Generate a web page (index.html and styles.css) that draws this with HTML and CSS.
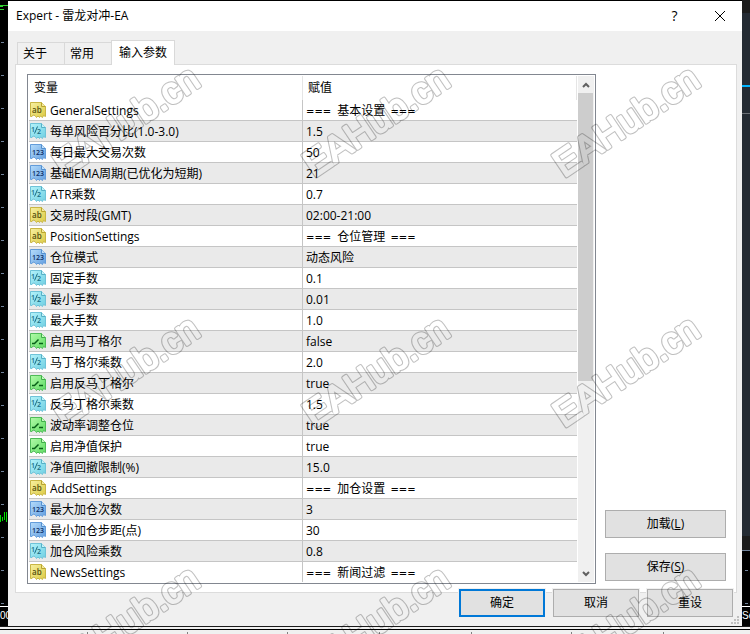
FILE: index.html
```
<!DOCTYPE html>
<html lang="zh-CN">
<head>
  <meta charset="UTF-8" />
  <meta name="viewport" content="width=device-width, initial-scale=1" />
  <title>Expert - 雷龙对冲-EA</title>
  <link rel="stylesheet" href="styles.css">
</head>
<body>

  <!-- Icon definitions -->
  <svg class="defs" aria-hidden="true">
    <defs>
      <linearGradient id="gYellow" x1="0" y1="0" x2="1" y2="1"><stop offset="0" stop-color="#f7f0a0" /><stop offset="1" stop-color="#dccb45" /></linearGradient>
      <linearGradient id="gCyan" x1="0" y1="0" x2="1" y2="1"><stop offset="0" stop-color="#b4f3fa" /><stop offset="1" stop-color="#6fcfe2" /></linearGradient>
      <linearGradient id="gBlue" x1="0" y1="0" x2="1" y2="1"><stop offset="0" stop-color="#b5dcfb" /><stop offset="1" stop-color="#649fe0" /></linearGradient>
      <linearGradient id="gGreen" x1="0" y1="0" x2="1" y2="1"><stop offset="0" stop-color="#b2fba9" /><stop offset="1" stop-color="#5edb62" /></linearGradient>
      <path id="sheet" d="M.5.5H11.500L15.500 4.500V14.500L13.500 13.500L12.500 15.500L10.500 14L9.500 15.500L8 14L6.500 15.500L5 13.500L3 13L2 14.500L.5 14.500Z" />
      <path id="fold" d="M11.500.5V4.500H15.500" />
      <symbol id="ab" viewBox="0 0 16 16">
        <use href="#sheet" fill="url(#gYellow)" stroke="#c9b645" /><use href="#fold" fill="#f3eaa0" stroke="#b9a42f" />
        <text class="glyph" x="2" y="11" font-size="8" fill="#56500f">ab</text>
      </symbol>
      <symbol id="half" viewBox="0 0 16 16">
        <use href="#sheet" fill="url(#gCyan)" stroke="#6fc3d8" /><use href="#fold" fill="#c5f2f8" stroke="#55b0c6" />
        <text class="glyph" x="1" y="9" font-size="7" fill="#176c83">1</text>
        <path d="M4.500 10.500L7.500 3.500" stroke="#176c83" fill="none" />
        <text class="glyph" x="7" y="11" font-size="7" fill="#176c83">2</text>
      </symbol>
      <symbol id="num" viewBox="0 0 16 16">
        <use href="#sheet" fill="url(#gBlue)" stroke="#639cda" /><use href="#fold" fill="#c5e2fa" stroke="#5490cf" />
        <text class="glyph" x="2" y="11" font-size="7" fill="#0d2f66">123</text>
      </symbol>
      <symbol id="bool" viewBox="0 0 16 16">
        <use href="#sheet" fill="url(#gGreen)" stroke="#4fbb58" /><use href="#fold" fill="#c6fabe" stroke="#3fae49" />
        <path d="M2 10.500H4.500L8.500 6.500M9 10.500H13" stroke="#086018" stroke-width="1.500" fill="none" />
      </symbol>
      <!-- one tile row of the watermark -->
      <g id="markRow">
        <text transform="translate(64 178) rotate(-34)">EAHub.cn</text>
        <text transform="translate(314 178) rotate(-34)">EAHub.cn</text>
        <text transform="translate(564 178) rotate(-34)">EAHub.cn</text>
      </g>
    </defs>
  </svg>

  <div class="desktop">
    <!-- Chart peeking out on the left -->
    <div class="chart">
      <svg width="8" height="626" aria-hidden="true">
        <path d="M0 5.500H8M0 6.500H3M0 9.500H4" stroke="#2fd02f" fill="none" />
        <path d="M2.500 42V606" stroke="#71839b" stroke-width="3" stroke-dasharray="1 32" />
        <path d="M0.500 515V522M2.500 517V521M4.500 512V520M6.500 512V522" stroke="#00e000" />
        <path d="M0 606.500H8" stroke="#fff" />
        <text class="axis" x="0" y="619">00</text>
      </svg>
    </div>

    <main class="dialog">
      <header class="titlebar">
        <h1>Expert - 雷龙对冲-EA</h1>
        <button class="caption-btn" aria-label="帮助">?</button>
        <button class="caption-btn" aria-label="关闭">
          <svg width="12" height="12" viewBox="0 0 12 12"><path d="M1 1L11 11M11 1L1 11" stroke="#000" fill="none" /></svg>
        </button>
      </header>

      <div class="tabs" role="tablist">
        <button class="tab" role="tab">关于</button>
        <button class="tab" role="tab">常用</button>
        <button class="tab active" role="tab" aria-selected="true">输入参数</button>
      </div>

      <section class="panel">
        <div class="list">
          <table class="params">
            <thead>
              <tr><th class="name">变量</th><th>赋值</th></tr>
            </thead>
            <tbody>
              <tr><td><svg class="icon"><use href="#ab" /></svg>GeneralSettings</td><td><span class="eq">===</span> 基本设置 <span class="eq">===</span></td></tr>
              <tr><td><svg class="icon"><use href="#half" /></svg>每单风险百分比(1.0-3.0)</td><td>1.5</td></tr>
              <tr><td><svg class="icon"><use href="#num" /></svg>每日最大交易次数</td><td>50</td></tr>
              <tr><td><svg class="icon"><use href="#num" /></svg>基础EMA周期(已优化为短期)</td><td>21</td></tr>
              <tr><td><svg class="icon"><use href="#half" /></svg>ATR乘数</td><td>0.7</td></tr>
              <tr><td><svg class="icon"><use href="#ab" /></svg>交易时段(GMT)</td><td>02:00-21:00</td></tr>
              <tr><td><svg class="icon"><use href="#ab" /></svg>PositionSettings</td><td><span class="eq">===</span> 仓位管理 <span class="eq">===</span></td></tr>
              <tr><td><svg class="icon"><use href="#num" /></svg>仓位模式</td><td>动态风险</td></tr>
              <tr><td><svg class="icon"><use href="#half" /></svg>固定手数</td><td>0.1</td></tr>
              <tr><td><svg class="icon"><use href="#half" /></svg>最小手数</td><td>0.01</td></tr>
              <tr><td><svg class="icon"><use href="#half" /></svg>最大手数</td><td>1.0</td></tr>
              <tr><td><svg class="icon"><use href="#bool" /></svg>启用马丁格尔</td><td>false</td></tr>
              <tr><td><svg class="icon"><use href="#half" /></svg>马丁格尔乘数</td><td>2.0</td></tr>
              <tr><td><svg class="icon"><use href="#bool" /></svg>启用反马丁格尔</td><td>true</td></tr>
              <tr><td><svg class="icon"><use href="#half" /></svg>反马丁格尔乘数</td><td>1.5</td></tr>
              <tr><td><svg class="icon"><use href="#bool" /></svg>波动率调整仓位</td><td>true</td></tr>
              <tr><td><svg class="icon"><use href="#bool" /></svg>启用净值保护</td><td>true</td></tr>
              <tr><td><svg class="icon"><use href="#half" /></svg>净值回撤限制(%)</td><td>15.0</td></tr>
              <tr><td><svg class="icon"><use href="#ab" /></svg>AddSettings</td><td><span class="eq">===</span> 加仓设置 <span class="eq">===</span></td></tr>
              <tr><td><svg class="icon"><use href="#num" /></svg>最大加仓次数</td><td>3</td></tr>
              <tr><td><svg class="icon"><use href="#num" /></svg>最小加仓步距(点)</td><td>30</td></tr>
              <tr><td><svg class="icon"><use href="#half" /></svg>加仓风险乘数</td><td>0.8</td></tr>
              <tr><td><svg class="icon"><use href="#ab" /></svg>NewsSettings</td><td><span class="eq">===</span> 新闻过滤 <span class="eq">===</span></td></tr>
            </tbody>
          </table>
          <div class="scrollbar">
            <button class="arrow" aria-label="向上"><svg width="8" height="6" viewBox="0 0 8 6"><path d="M1 5L4 2L7 5" /></svg></button>
            <div class="track"><div class="thumb"></div></div>
            <button class="arrow" aria-label="向下"><svg width="8" height="6" viewBox="0 0 8 6"><path d="M1 1L4 4L7 1" /></svg></button>
          </div>
        </div>
        <div class="side">
          <button class="btn">加载(<u>L</u>)</button>
          <button class="btn">保存(<u>S</u>)</button>
        </div>
      </section>

      <footer class="actions">
        <button class="btn primary">确定</button>
        <button class="btn">取消</button>
        <button class="btn">重设</button>
      </footer>

      <svg class="grip" width="8" height="8" aria-hidden="true">
        <path d="M6 0h2v2h-2zM3 3h2v2h-2zM6 3h2v2h-2zM0 6h2v2h-2zM3 6h2v2h-2zM6 6h2v2h-2z" fill="#bfbfbf" />
      </svg>
    </main>

    <!-- Chart peeking out on the right -->
    <div class="chart right">
      <svg width="8" height="626" aria-hidden="true">
        <path d="M0 0H8V13H0ZM0 536H8V550H0Z" fill="#1c1c1c" />
        <path d="M0 13H8V536H0Z" fill="#242b33" />
        <path d="M0 86H8" stroke="#00b4ff" stroke-width="2" />
        <path d="M0 113.500H8" stroke="#6b7076" />
        <path d="M0 550.500H8M3 570.500H6M3 603.500H6" stroke="#71839b" />
        <path d="M0 606.500H8" stroke="#fff" />
        <text class="axis" x="0" y="619">Se</text>
      </svg>
    </div>
  </div>

  <div class="statusbar">
    <span class="wide"></span><span class="wide"></span><span></span><span></span><span class="wide"></span><span></span><span></span>
  </div>

  <!-- Watermark layer, the mask keeps only the rim around each letter -->
  <svg class="watermark" aria-hidden="true">
    <mask id="rim" maskUnits="userSpaceOnUse" x="0" y="0" width="100%" height="100%">
      <g class="outer"><use href="#markRow" /><use href="#markRow" y="250" /><use href="#markRow" y="500" /></g>
      <g class="inner"><use href="#markRow" /><use href="#markRow" y="250" /><use href="#markRow" y="500" /></g>
    </mask>
    <rect width="100%" height="100%" mask="url(#rim)" />
  </svg>

</body>
</html>
```
FILE: styles.css
```
* {
  box-sizing: border-box;
}
body {
  margin: 0;
  min-height: 100vh;
  display: flex;
  flex-direction: column;
  background: #f0f0f0;
  color: #000;
  font-family: "Open Sans", "Noto Sans CJK SC", sans-serif;
  font-size: 12px;
  line-height: 16px;
  overflow: hidden;
  position: relative;
}
button {
  font: inherit;
  color: inherit;
  margin: 0;
  padding: 0;
}
.defs {
  position: absolute;
  width: 0;
  height: 0;
}
.glyph {
  font-family: "Open Sans", sans-serif;
  font-weight: 600;
}
.desktop {
  display: flex;
  background: #000;
  border-bottom: 1px solid #1a1a1a;
}
.chart {
  flex: 0 0 8px;
  overflow: hidden;
}
.chart svg {
  display: block;
}
.axis {
  font-family: "Liberation Sans", Arial, sans-serif;
  font-size: 10px;
  fill: #fff;
}
.dialog {
  flex: 1;
  min-width: 0;
  margin-top: 1px;
  padding-bottom: 9px;
  background: #f0f0f0;
  position: relative;
}

/* title bar */
.titlebar {
  display: flex;
  align-items: center;
  height: 30px;
  padding-left: 8px;
  background: #fff;
}
.titlebar h1 {
  flex: 1;
  margin: 0;
  font-size: 12px;
  font-weight: 400;
}
.caption-btn {
  display: flex;
  align-items: center;
  justify-content: center;
  width: 45px;
  height: 30px;
  border: none;
  background: none;
  font-size: 14px;
}

/* tabs */
.tabs {
  display: flex;
  align-items: flex-end;
  height: 34px;
  padding-left: 9px;
  position: relative;
  z-index: 1;
  margin-bottom: -1px;
}
.tab {
  width: 47px;
  height: 23px;
  padding: 0 12px 0 0;
  border: 1px solid #d9d9d9;
  border-right: none;
  background: #f0f0f0;
}
.tab.active {
  width: 64px;
  height: 25px;
  padding: 0;
  border-right: 1px solid #d9d9d9;
  border-bottom: none;
  background: #fff;
}

/* parameter page */
.panel {
  display: flex;
  gap: 9px;
  margin: 0 5px 0 7px;
  padding: 9px 10px 8px 11px;
  border: 1px solid #dcdcdc;
  background: #fff;
}
.list {
  flex: 1;
  display: flex;
  padding: 1px;
  border: 1px solid #828790;
  background: #fff;
}
.params {
  flex: 1;
  border-collapse: separate;
  border-spacing: 0;
  table-layout: fixed;
  margin-right: 1px;
}
.params th {
  height: 24px;
  padding: 0 5px;
  text-align: left;
  font-weight: 400;
  border-right: 1px solid #e5e5e5;
}
.params .name {
  width: 50%;
}
.params td {
  height: 21px;
  padding: 2px 3px 0;
  border-bottom: 1px solid #c5c5c5;
  line-height: 18px;
  white-space: nowrap;
}
.params td:first-child {
  padding: 2px 1px 0;
  border-right: 1px solid #c5c5c5;
}
.params tr:nth-child(even) td {
  background: #eaeaea;
}
.params tbody tr:last-child td {
  height: 20px;
  border-bottom: none;
}
.icon {
  width: 16px;
  height: 16px;
  margin-right: 4px;
  vertical-align: top;
}
.eq {
  font-family: "DejaVu Sans", sans-serif;
  font-size: 10px;
  line-height: 12px;
}
.eq:first-child {
  margin-right: 3px;
}
.eq:last-child {
  margin-left: 2px;
}

/* scroll bar */
.scrollbar {
  display: flex;
  flex-direction: column;
  width: 16px;
  background: #f0f0f0;
}
.arrow {
  display: flex;
  align-items: center;
  justify-content: center;
  height: 17px;
  border: none;
  background: none;
}
.arrow path {
  fill: none;
  stroke: #606060;
  stroke-width: 2;
}
.track {
  flex: 1;
  padding-right: 1px;
}
.thumb {
  height: 61%;
  background: #cdcdcd;
}

/* buttons */
.side {
  display: flex;
  flex-direction: column;
  justify-content: flex-end;
  gap: 15px;
  width: 121px;
  padding-bottom: 3px;
}
.btn {
  height: 28px;
  border: 1px solid #adadad;
  background: #e1e1e1;
}
.actions {
  display: flex;
  justify-content: flex-end;
  gap: 8px;
  margin-top: -4px;
  padding-right: 9px;
}
.actions .btn {
  width: 86px;
  box-shadow: 0 0 0 1px #f0f0f0;
}
.actions .primary {
  border: 2px solid #0078d7;
}
.grip {
  position: absolute;
  right: 3px;
  bottom: 2px;
}

/* terminal status bar */
.statusbar {
  flex: 1;
  display: flex;
  margin-top: 2px;
  padding-left: 87px;
  border-top: 1px solid #000;
}
.statusbar span {
  flex: 0 0 92px;
  margin-top: 2px;
  border-left: 1px solid #808080;
}
.statusbar .wide {
  flex-basis: 100px;
}

/* watermark */
.watermark {
  position: absolute;
  top: 0;
  left: 0;
  width: 100%;
  height: 100%;
  pointer-events: none;
  z-index: 5;
}
.watermark rect {
  fill: rgba(0, 0, 0, 0.25);
}
#markRow {
  font-family: "Liberation Sans", Arial, sans-serif;
  font-size: 37px;
  stroke-linejoin: round;
}
.outer {
  fill: #fff;
  stroke: #fff;
  stroke-width: 4px;
}
.inner {
  fill: #000;
  stroke: #000;
  stroke-width: 2px;
}
```
